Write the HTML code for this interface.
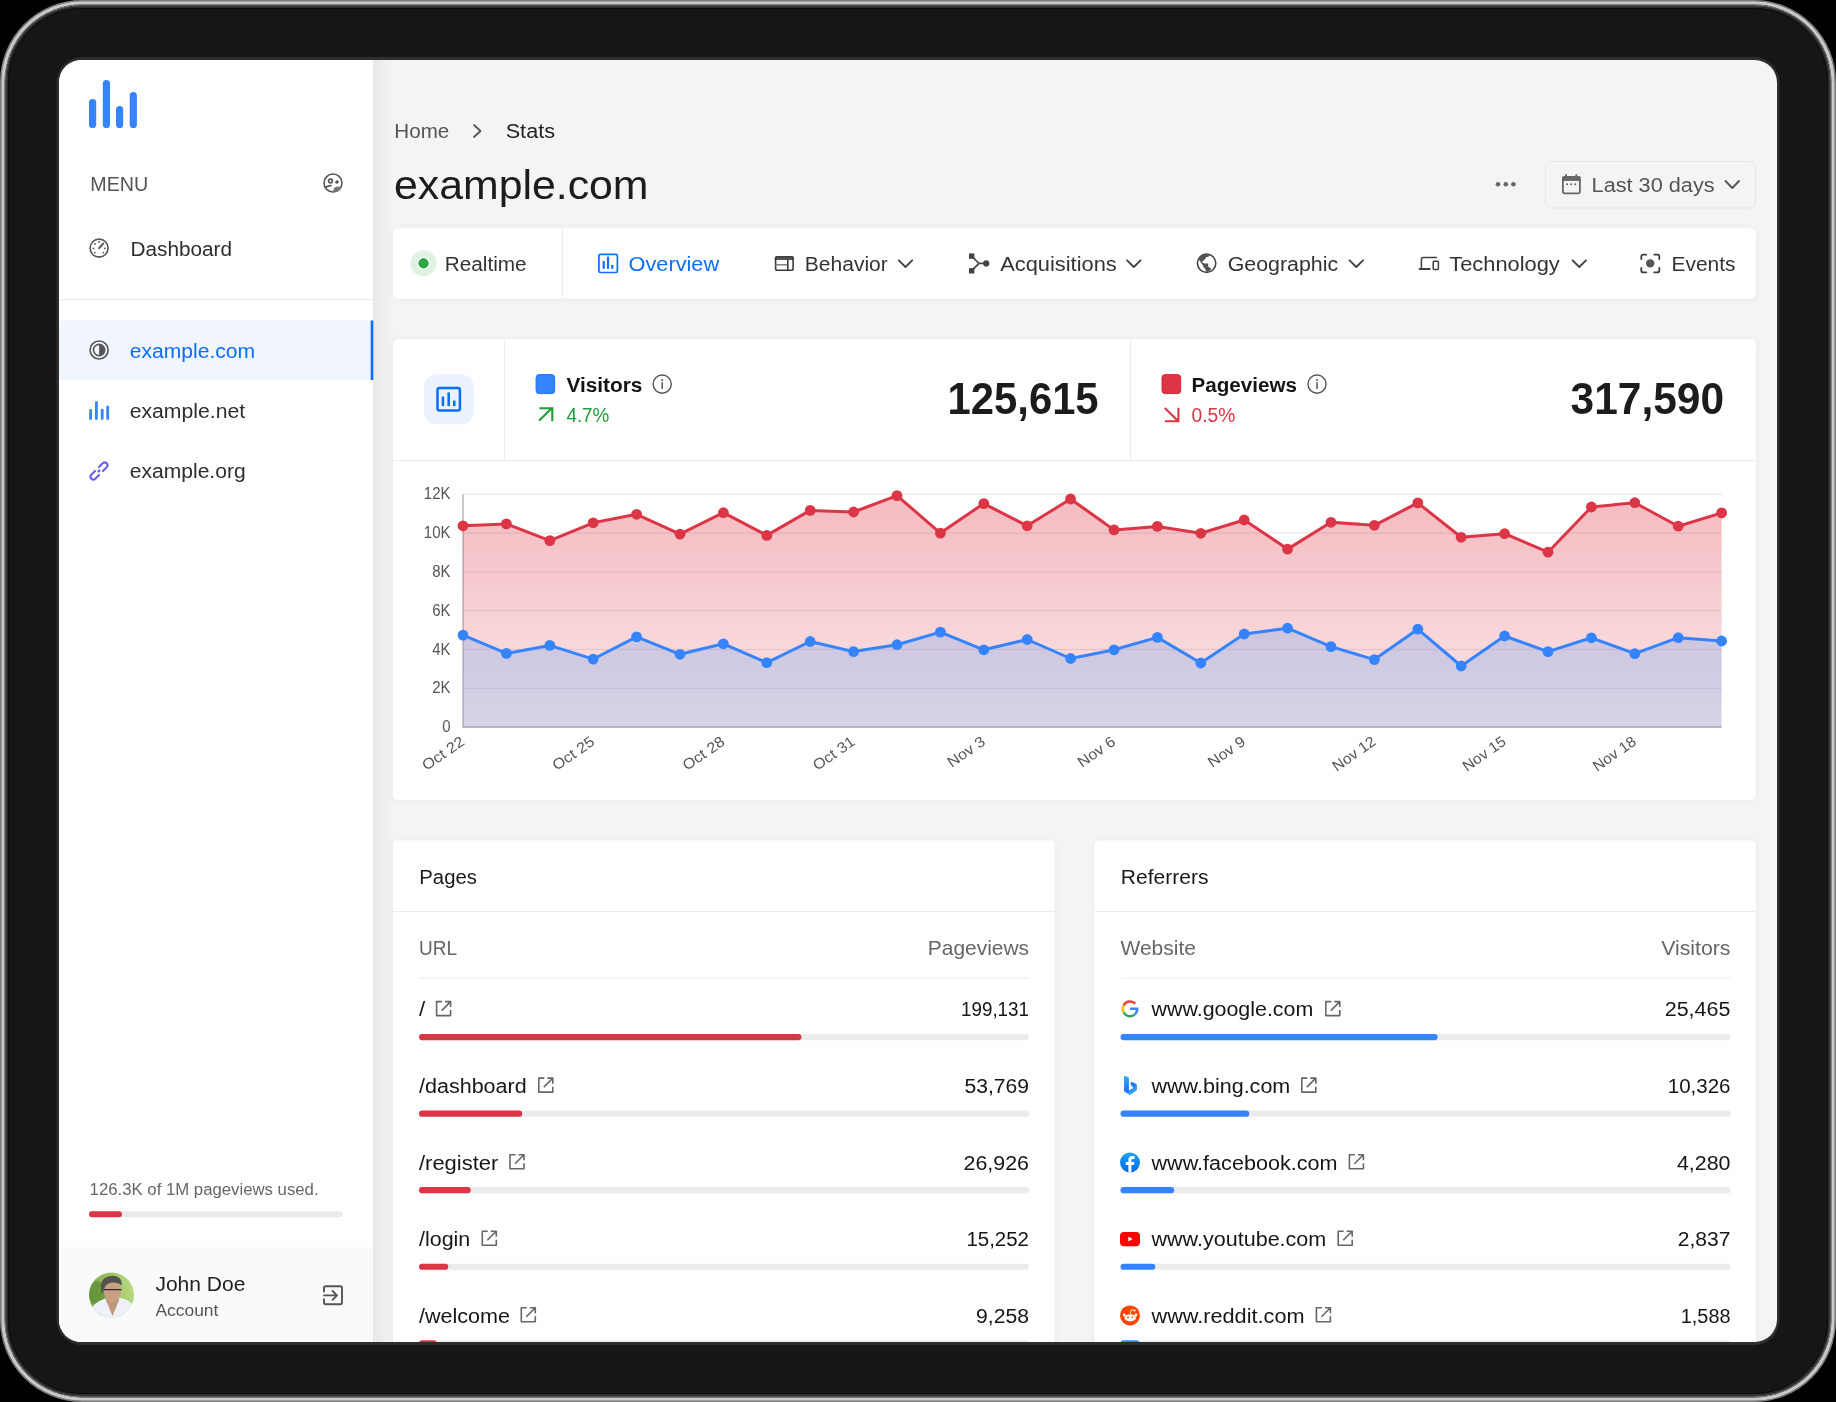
<!DOCTYPE html>
<html><head><meta charset="utf-8"><style>
html,body{margin:0;padding:0;background:#000;width:1836px;height:1402px;overflow:hidden}
svg{display:block;will-change:transform}
text{font-family:"Liberation Sans", sans-serif}
</style></head><body>
<svg width="1836" height="1402" viewBox="0 0 1836 1402">
<defs>
<linearGradient id="gRed" x1="0" y1="494" x2="0" y2="727" gradientUnits="userSpaceOnUse"><stop offset="0" stop-color="#dc3545" stop-opacity="0.34"/><stop offset="1" stop-color="#dc3545" stop-opacity="0.12"/></linearGradient>
<linearGradient id="gBlue" x1="0" y1="494" x2="0" y2="727" gradientUnits="userSpaceOnUse"><stop offset="0" stop-color="#7fa9ea" stop-opacity="0.42"/><stop offset="1" stop-color="#7fa9ea" stop-opacity="0.30"/></linearGradient>
<linearGradient id="shadow" x1="0" y1="0" x2="1" y2="0"><stop offset="0" stop-color="#000" stop-opacity="0.05"/><stop offset="1" stop-color="#000" stop-opacity="0"/></linearGradient>
<filter id="sh" x="-3%" y="-10%" width="106%" height="120%"><feDropShadow dx="0" dy="0.5" stdDeviation="3" flood-color="#000" flood-opacity="0.045"/></filter>
<clipPath id="scr"><rect x="59" y="60" width="1718" height="1282" rx="22.5" ry="22.5"/></clipPath>
<clipPath id="avc"><circle cx="111.5" cy="1295" r="22.5"/></clipPath>
<linearGradient id="avbg" x1="0" y1="0.5" x2="1" y2="0.3"><stop offset="0" stop-color="#76a544"/><stop offset="1" stop-color="#bcdc86"/></linearGradient>
</defs>

<rect x="0" y="0" width="1836" height="1402" rx="82" ry="82" fill="#161616"/>
<rect x="0.65" y="0.65" width="1834.7" height="1400.7" rx="81.35" ry="81.35" fill="none" stroke="#7a7a7a" stroke-width="1.3"/>
<rect x="2.95" y="2.95" width="1830.1" height="1396.1" rx="79.05" ry="79.05" fill="none" stroke="#c9c9c9" stroke-width="3.3"/>
<rect x="5.1" y="5.1" width="1825.8" height="1391.8" rx="76.9" ry="76.9" fill="none" stroke="#8a8a8a" stroke-width="1.0"/>
<rect x="6.2" y="6.2" width="1823.6" height="1389.6" rx="75.8" ry="75.8" fill="none" stroke="#444" stroke-width="1.2"/>
<rect x="7.4" y="7.4" width="1821.2" height="1387.2" rx="74.6" ry="74.6" fill="none" stroke="#2c2c2c" stroke-width="1.2"/>
<rect x="8.5" y="8.5" width="1819.0" height="1385.0" rx="73.5" ry="73.5" fill="none" stroke="#0b0b0b" stroke-width="1.0"/>
<rect x="56.5" y="57" width="1723" height="1288" rx="25.5" ry="25.5" fill="#2e2e2e"/>
<g clip-path="url(#scr)">
<rect x="59" y="60" width="1718" height="1282" fill="#f4f4f4"/>
<rect x="373" y="60" width="22" height="1282" fill="url(#shadow)"/>
<rect x="59" y="60" width="314" height="1282" fill="#ffffff"/>
<rect x="59" y="1247" width="314" height="95" fill="#f9fafc"/>
<rect x="59" y="299" width="314" height="1.2" fill="#ececec"/>
<rect x="59" y="320.5" width="314" height="59.5" fill="#f0f5fe"/>
<rect x="370.7" y="320.5" width="2.6" height="59.5" fill="#0d6efd"/>
<rect x="89" y="99" width="7.2" height="29" rx="3.6" fill="#3584fe"/>
<rect x="102.8" y="80" width="7.2" height="48" rx="3.6" fill="#3584fe"/>
<rect x="116" y="106" width="7.2" height="22" rx="3.6" fill="#3584fe"/>
<rect x="129.7" y="92" width="7.2" height="36" rx="3.6" fill="#3584fe"/>
<text x="90.3" y="190.5" font-size="19.5" fill="#555" font-weight="400" text-anchor="start" textLength="58" lengthAdjust="spacingAndGlyphs" >MENU</text>
<g fill="none" stroke="#555" stroke-width="1.6">
<circle cx="333" cy="183" r="9"/>
<circle cx="330.5" cy="181" r="1.9"/>
<path d="M325.5 187.2 Q328 185.8 331 185.6" stroke-linecap="round"/>
</g>
<circle cx="337" cy="182" r="1.8" fill="#555"/>
<path d="M333.2 192 Q333 187 337.5 186.6 Q340.5 186.6 341.6 187.6 A9 9 0 0 1 333.2 192 Z" fill="#777"/>
<g fill="none" stroke="#555" stroke-width="1.6" stroke-linecap="round">
<circle cx="99.1" cy="248.1" r="9"/>
<path d="M99.1 248.1 L103.2 243.6" stroke-width="2"/>
</g>
<g fill="#555">
<circle cx="99.1" cy="242" r="0.9"/><circle cx="95" cy="244" r="0.9"/><circle cx="93.4" cy="248.3" r="0.9"/>
<circle cx="94.9" cy="252.6" r="0.9"/><circle cx="103.3" cy="252.6" r="0.9"/><circle cx="104.8" cy="248.3" r="0.9"/>
</g>
<text x="130.5" y="256" font-size="20" fill="#2e2e2e" font-weight="400" text-anchor="start" textLength="101.5" lengthAdjust="spacingAndGlyphs" >Dashboard</text>
<circle cx="99.1" cy="350" r="9" fill="none" stroke="#555" stroke-width="1.6"/>
<circle cx="99.1" cy="350" r="5.6" fill="none" stroke="#555" stroke-width="1.6"/>
<path d="M99.1 344.4 A5.6 5.6 0 0 1 99.1 355.6 Z" fill="#555"/>
<text x="129.7" y="357.6" font-size="20" fill="#0d6efd" font-weight="400" text-anchor="start" textLength="125.5" lengthAdjust="spacingAndGlyphs" >example.com</text>
<rect x="89.2" y="409" width="2.8" height="11" rx="1.4" fill="#3584fe"/>
<rect x="95" y="401" width="2.8" height="19" rx="1.4" fill="#3584fe"/>
<rect x="100.8" y="408.7" width="2.8" height="11.300000000000011" rx="1.4" fill="#3584fe"/>
<rect x="106.3" y="405.6" width="2.8" height="14.399999999999977" rx="1.4" fill="#3584fe"/>
<text x="129.7" y="417.9" font-size="20" fill="#2e2e2e" font-weight="400" text-anchor="start" textLength="115.5" lengthAdjust="spacingAndGlyphs" >example.net</text>
<g fill="none" stroke="#6a5ef8" stroke-width="2.1" stroke-linecap="round" transform="translate(99 471) rotate(-45)">
<path d="M2.8 -2.8 H8 A2.8 2.8 0 0 1 8 2.8 H2.8"/>
<path d="M-2.8 2.8 H-8 A2.8 2.8 0 0 1 -8 -2.8 H-2.8"/>
<path d="M-0.6 0 H0.6" stroke-width="2.3"/>
</g>
<text x="129.7" y="478.4" font-size="20" fill="#2e2e2e" font-weight="400" text-anchor="start" textLength="116" lengthAdjust="spacingAndGlyphs" >example.org</text>
<text x="89.6" y="1194.8" font-size="16" fill="#666" font-weight="400" text-anchor="start" textLength="229" lengthAdjust="spacingAndGlyphs" >126.3K of 1M pageviews used.</text>
<rect x="89" y="1211.3" width="254" height="6" rx="3" fill="#ebebeb"/>
<rect x="89" y="1211.3" width="33" height="6" rx="3" fill="#dc3545"/>
<g clip-path="url(#avc)"><rect x="88" y="1272" width="47" height="47" fill="url(#avbg)"/><ellipse cx="97" cy="1293" rx="8" ry="12" fill="#5e8f32" opacity="0.7"/><path d="M86 1322 Q90 1303 104 1299 L121 1298 Q133 1301 138 1312 L138 1322 Z" fill="#edf1f7"/><path d="M105.5 1299 L119.5 1299 L112.5 1316 Z" fill="#c19878"/><ellipse cx="112.5" cy="1291" rx="8.6" ry="11" fill="#c9a083"/><path d="M101.8 1294 Q99 1283 104 1278.5 Q110 1274.5 117 1276.5 Q122.5 1279 121.5 1285.5 Q118 1282 112 1282.5 Q105.5 1283 103.8 1290 Z" fill="#56524f"/><path d="M104 1289.7 H121.5" stroke="#2b2b2b" stroke-width="1.3"/></g>
<text x="155.4" y="1290.5" font-size="20" fill="#222" font-weight="400" text-anchor="start" textLength="90" lengthAdjust="spacingAndGlyphs" >John Doe</text>
<text x="155.4" y="1316" font-size="16" fill="#555" font-weight="400" text-anchor="start" textLength="63" lengthAdjust="spacingAndGlyphs" >Account</text>
<g fill="none" stroke="#555" stroke-width="1.9" stroke-linecap="round" stroke-linejoin="round">
<path d="M324 1291.6 V1288 Q324 1286.3 325.7 1286.3 H340.3 Q342 1286.3 342 1288 V1302.5 Q342 1304.2 340.3 1304.2 H325.7 Q324 1304.2 324 1302.5 V1299.2"/>
<path d="M324 1295.4 H336.6 M332.6 1291 L337 1295.4 L332.6 1299.8"/>
</g>
<text x="394.3" y="137.7" font-size="20" fill="#555" font-weight="400" text-anchor="start" textLength="55" lengthAdjust="spacingAndGlyphs" >Home</text>
<path d="M474 125 L480.5 131 L474 137" fill="none" stroke="#555" stroke-width="1.8" stroke-linecap="round" stroke-linejoin="round"/>
<text x="505.7" y="137.7" font-size="20" fill="#222" font-weight="400" text-anchor="start" textLength="49.3" lengthAdjust="spacingAndGlyphs" >Stats</text>
<text x="394" y="198.5" font-size="40" fill="#1c1c1c" font-weight="400" text-anchor="start" textLength="254.5" lengthAdjust="spacingAndGlyphs" >example.com</text>
<circle cx="1498" cy="184.3" r="2.3" fill="#666"/>
<circle cx="1505.8" cy="184.3" r="2.3" fill="#666"/>
<circle cx="1513.4" cy="184.3" r="2.3" fill="#666"/>
<rect x="1545.5" y="161.5" width="210" height="46.5" rx="6" fill="none" stroke="#e6e6e6" stroke-width="1"/>
<g fill="none" stroke="#666" stroke-width="1.8" stroke-linejoin="round">
<rect x="1562.9" y="177" width="17" height="16.4" rx="1.8"/>
</g>
<rect x="1562.5" y="176.5" width="18" height="4.4" fill="#666"/>
<rect x="1565.2" y="174" width="1.8" height="4" rx="0.9" fill="#666"/>
<rect x="1575.4" y="174" width="1.8" height="4" rx="0.9" fill="#666"/>
<circle cx="1567.1" cy="184.3" r="1" fill="#666"/><circle cx="1571.2" cy="184.3" r="1" fill="#666"/><circle cx="1575.3" cy="184.3" r="1" fill="#666"/>
<text x="1591.6" y="191.9" font-size="20" fill="#555" font-weight="400" text-anchor="start" textLength="123" lengthAdjust="spacingAndGlyphs" >Last 30 days</text>
<path d="M1725.5 181 L1732.3 188 L1739 181" fill="none" stroke="#555" stroke-width="1.9" stroke-linecap="round" stroke-linejoin="round"/>
<rect x="393" y="228.3" width="1363" height="70.2" rx="5" fill="#fff" filter="url(#sh)"/>
<rect x="562" y="228.3" width="1" height="70.2" fill="#ececec"/>
<circle cx="423.5" cy="263.3" r="13" fill="#dff2e2"/><circle cx="423.5" cy="263.3" r="6.4" fill="#fff"/><circle cx="423.5" cy="263.3" r="4.6" fill="#2ea845" stroke="#0f9d2e" stroke-width="1"/>
<text x="444.7" y="271.2" font-size="20" fill="#333" font-weight="400" text-anchor="start" textLength="82" lengthAdjust="spacingAndGlyphs" >Realtime</text>
<g fill="none" stroke="#0d6efd" stroke-width="1.7"><rect x="598.9" y="254.3" width="18.5" height="18.2" rx="1.5"/></g>
<rect x="602.6" y="261" width="2.2" height="7.8" fill="#0d6efd"/><rect x="606.9" y="256.6" width="2.2" height="12.2" fill="#0d6efd"/><rect x="611.2" y="265" width="2.2" height="3.8" fill="#0d6efd"/>
<text x="628.6" y="271.2" font-size="20" fill="#0d6efd" font-weight="400" text-anchor="start" textLength="90.5" lengthAdjust="spacingAndGlyphs" >Overview</text>
<path d="M774.8 258 Q774.8 255.9 776.9 255.9 H791.8 Q793.9 255.9 793.9 258 V260 H774.8 Z" fill="#555"/>
<g fill="none" stroke="#3c3c3c" stroke-width="1.6"><rect x="775.6" y="256.7" width="17.5" height="13.5" rx="1.8"/>
<path d="M787.8 259.6 V270.5"/></g><path d="M775.5 264.8 H787" stroke="#777" stroke-width="1.4"/>
<text x="804.8" y="271.2" font-size="20" fill="#333" font-weight="400" text-anchor="start" textLength="83" lengthAdjust="spacingAndGlyphs" >Behavior</text>
<path d="M898.8 260.3 L905.5 267 L912.2 260.3" fill="none" stroke="#444" stroke-width="1.9" stroke-linecap="round" stroke-linejoin="round"/>
<g fill="#444"><rect x="969" y="253.4" width="5.4" height="5.4"/><rect x="969" y="268.1" width="5.4" height="5.4"/><circle cx="986.2" cy="263.4" r="3.1"/></g>
<path d="M971.4 256 L979 263.4 L971.4 270.8 M979 263.4 H986" fill="none" stroke="#444" stroke-width="1.7"/>
<text x="1000.2" y="271.2" font-size="20" fill="#333" font-weight="400" text-anchor="start" textLength="116.5" lengthAdjust="spacingAndGlyphs" >Acquisitions</text>
<path d="M1127.1 260.3 L1133.8 267 L1140.5 260.3" fill="none" stroke="#444" stroke-width="1.9" stroke-linecap="round" stroke-linejoin="round"/>
<circle cx="1206.6" cy="263.3" r="9.2" fill="none" stroke="#444" stroke-width="1.6"/>
<path d="M1198.8 259.5 Q1200 255 1206 254.2 Q1209 254.3 1209.6 255.5 Q1208.5 257 1206.5 257 Q1205 258.5 1204.5 260 Q1203 260.8 1202 261.7 Q1203 263.3 1205 263.5 L1208.2 263.6 L1208.3 266.8 Q1210 268 1211.5 268.5 Q1210 271.2 1206.6 272.5 L1205.5 269.5 Q1203 267 1202.7 265 Z" fill="#555"/>
<text x="1227.7" y="271.2" font-size="20" fill="#333" font-weight="400" text-anchor="start" textLength="110.5" lengthAdjust="spacingAndGlyphs" >Geographic</text>
<path d="M1349.6 260.3 L1356.3 267 L1363.0 260.3" fill="none" stroke="#444" stroke-width="1.9" stroke-linecap="round" stroke-linejoin="round"/>
<g fill="none" stroke="#3f3f3f" stroke-width="1.5" stroke-linecap="round"><path d="M1421.4 268.6 V259.3 Q1421.4 257.6 1423.1 257.6 H1436.4"/><path d="M1419.6 269.1 H1429.7" stroke-width="2"/><rect x="1433.2" y="261.3" width="5.2" height="8.1" rx="0.9"/></g>
<text x="1449.3" y="271.2" font-size="20" fill="#333" font-weight="400" text-anchor="start" textLength="110.5" lengthAdjust="spacingAndGlyphs" >Technology</text>
<path d="M1572.6 260.3 L1579.3 267 L1586.0 260.3" fill="none" stroke="#444" stroke-width="1.9" stroke-linecap="round" stroke-linejoin="round"/>
<g fill="none" stroke="#3f3f3f" stroke-width="1.8" stroke-linecap="round" stroke-linejoin="round"><path d="M1641.3 259.1 V256.6 Q1641.3 254.6 1643.3 254.6 H1646.3 M1654.2 254.6 H1657.3 Q1659.3 254.6 1659.3 256.6 V259.1 M1659.3 267.8 V270.4 Q1659.3 272.4 1657.3 272.4 H1654.2 M1646.3 272.4 H1643.3 Q1641.3 272.4 1641.3 270.4 V267.8"/></g><circle cx="1650.2" cy="263.4" r="4.2" fill="#555"/>
<text x="1671.5" y="271.2" font-size="20" fill="#333" font-weight="400" text-anchor="start" textLength="64" lengthAdjust="spacingAndGlyphs" >Events</text>
<rect x="393" y="339" width="1363" height="461" rx="5" fill="#fff" filter="url(#sh)"/>
<rect x="504" y="339" width="1" height="121" fill="#ececec"/>
<rect x="1130" y="339" width="1" height="121" fill="#ececec"/>
<rect x="393" y="460" width="1363" height="1" fill="#ececec"/>
<rect x="423.8" y="374.2" width="50" height="50" rx="13" fill="#eaf2fe"/>
<rect x="437.5" y="387.9" width="22.4" height="22.6" rx="2" fill="none" stroke="#0d6efd" stroke-width="2.5"/>
<rect x="441.7" y="396.5" width="2.5" height="9.6" fill="#0d6efd"/><rect x="447.4" y="392.4" width="2.6" height="13.7" fill="#0d6efd"/><rect x="453" y="400.6" width="2.5" height="5.5" fill="#0d6efd"/>
<rect x="536.1" y="374.6" width="18.6" height="19" rx="3.2" fill="#3584fe" stroke="#1f73fd" stroke-width="1"/>
<text x="566.4" y="391.8" font-size="20" fill="#141414" font-weight="700" text-anchor="start" textLength="76" lengthAdjust="spacingAndGlyphs" >Visitors</text>
<circle cx="662.2" cy="384.1" r="9.1" fill="none" stroke="#555" stroke-width="1.4"/><circle cx="662.2" cy="379.90000000000003" r="1" fill="#555"/><rect x="661.45" y="382.3" width="1.5" height="6.6" fill="#555"/>
<path d="M539.2 420.5 L552.2 407.7 M539.3 408.2 H552.3 V421.2" fill="none" stroke="#1f9d36" stroke-width="2.1"/>
<text x="566.4" y="421.9" font-size="20" fill="#1f9d36" font-weight="400" text-anchor="start" textLength="43" lengthAdjust="spacingAndGlyphs" >4.7%</text>
<text x="0" y="0" transform="translate(947.6 413.9) scale(1 1.06)" font-size="42" fill="#1c1c1c" font-weight="700" text-anchor="start" textLength="151" lengthAdjust="spacingAndGlyphs" >125,615</text>
<rect x="1162" y="374.6" width="18.7" height="19" rx="3.2" fill="#dc3545" stroke="#d92335" stroke-width="1"/>
<text x="1191.5" y="391.8" font-size="20" fill="#141414" font-weight="700" text-anchor="start" textLength="105.5" lengthAdjust="spacingAndGlyphs" >Pageviews</text>
<circle cx="1317" cy="384.1" r="9.1" fill="none" stroke="#555" stroke-width="1.4"/><circle cx="1317" cy="379.90000000000003" r="1" fill="#555"/><rect x="1316.25" y="382.3" width="1.5" height="6.6" fill="#555"/>
<path d="M1164.8 407.9 L1177.8 420.7 M1164.9 421.3 H1178.4 V407.8" fill="none" stroke="#dc3545" stroke-width="2.1"/>
<text x="1191.5" y="421.9" font-size="20" fill="#dc3545" font-weight="400" text-anchor="start" textLength="43.8" lengthAdjust="spacingAndGlyphs" >0.5%</text>
<text x="0" y="0" transform="translate(1570.6 413.5) scale(1 1.06)" font-size="42" fill="#1c1c1c" font-weight="700" text-anchor="start" textLength="153.5" lengthAdjust="spacingAndGlyphs" >317,590</text>
<rect x="463.0" y="726.50" width="1258.60" height="1.2" fill="#bdbdbd"/>
<text x="450.5" y="732.10" font-size="15.6" fill="#555" font-weight="400" text-anchor="end" textLength="8.34" lengthAdjust="spacingAndGlyphs" >0</text>
<rect x="463.0" y="687.70" width="1258.60" height="1.2" fill="#e6e6e6"/>
<text x="450.5" y="693.30" font-size="15.6" fill="#555" font-weight="400" text-anchor="end" textLength="18.34" lengthAdjust="spacingAndGlyphs" >2K</text>
<rect x="463.0" y="648.90" width="1258.60" height="1.2" fill="#e6e6e6"/>
<text x="450.5" y="654.50" font-size="15.6" fill="#555" font-weight="400" text-anchor="end" textLength="18.34" lengthAdjust="spacingAndGlyphs" >4K</text>
<rect x="463.0" y="610.10" width="1258.60" height="1.2" fill="#e6e6e6"/>
<text x="450.5" y="615.70" font-size="15.6" fill="#555" font-weight="400" text-anchor="end" textLength="18.34" lengthAdjust="spacingAndGlyphs" >6K</text>
<rect x="463.0" y="571.30" width="1258.60" height="1.2" fill="#e6e6e6"/>
<text x="450.5" y="576.90" font-size="15.6" fill="#555" font-weight="400" text-anchor="end" textLength="18.34" lengthAdjust="spacingAndGlyphs" >8K</text>
<rect x="463.0" y="532.50" width="1258.60" height="1.2" fill="#e6e6e6"/>
<text x="450.5" y="538.10" font-size="15.6" fill="#555" font-weight="400" text-anchor="end" textLength="26.68" lengthAdjust="spacingAndGlyphs" >10K</text>
<rect x="463.0" y="493.70" width="1258.60" height="1.2" fill="#e6e6e6"/>
<text x="450.5" y="499.30" font-size="15.6" fill="#555" font-weight="400" text-anchor="end" textLength="26.68" lengthAdjust="spacingAndGlyphs" >12K</text>
<rect x="462.4" y="494.2" width="1.2" height="233.40" fill="#a8a8a8"/>
<rect x="462.4" y="726.4" width="1259.20" height="1.4" fill="#b8b8b8"/>
<polygon points="463.0,727.0 463.00,525.80 506.40,523.90 549.80,540.60 593.20,522.80 636.60,514.30 680.00,534.20 723.40,512.70 766.80,535.40 810.20,510.40 853.60,512.00 897.00,495.60 940.40,533.10 983.80,503.60 1027.20,525.80 1070.60,499.00 1114.00,529.90 1157.40,526.40 1200.80,533.30 1244.20,520.00 1287.60,549.10 1331.00,522.30 1374.40,525.30 1417.80,502.90 1461.20,537.30 1504.60,533.70 1548.00,552.20 1591.40,507.00 1634.80,502.70 1678.20,526.20 1721.60,512.90 1721.6,727.0" fill="url(#gRed)"/>
<polygon points="463.0,727.0 463.00,635.10 506.40,653.40 549.80,645.40 593.20,659.10 636.60,636.90 680.00,654.30 723.40,643.80 766.80,662.60 810.20,641.50 853.60,651.60 897.00,644.70 940.40,632.10 983.80,649.80 1027.20,639.50 1070.60,658.50 1114.00,649.80 1157.40,637.40 1200.80,663.00 1244.20,634.00 1287.60,628.20 1331.00,646.60 1374.40,659.60 1417.80,629.20 1461.20,666.00 1504.60,636.00 1548.00,651.60 1591.40,637.80 1634.80,653.70 1678.20,637.70 1721.60,641.00 1721.6,727.0" fill="url(#gBlue)"/>
<polyline points="463.00,525.80 506.40,523.90 549.80,540.60 593.20,522.80 636.60,514.30 680.00,534.20 723.40,512.70 766.80,535.40 810.20,510.40 853.60,512.00 897.00,495.60 940.40,533.10 983.80,503.60 1027.20,525.80 1070.60,499.00 1114.00,529.90 1157.40,526.40 1200.80,533.30 1244.20,520.00 1287.60,549.10 1331.00,522.30 1374.40,525.30 1417.80,502.90 1461.20,537.30 1504.60,533.70 1548.00,552.20 1591.40,507.00 1634.80,502.70 1678.20,526.20 1721.60,512.90" fill="none" stroke="#dc3545" stroke-width="3" stroke-linejoin="round"/>
<polyline points="463.00,635.10 506.40,653.40 549.80,645.40 593.20,659.10 636.60,636.90 680.00,654.30 723.40,643.80 766.80,662.60 810.20,641.50 853.60,651.60 897.00,644.70 940.40,632.10 983.80,649.80 1027.20,639.50 1070.60,658.50 1114.00,649.80 1157.40,637.40 1200.80,663.00 1244.20,634.00 1287.60,628.20 1331.00,646.60 1374.40,659.60 1417.80,629.20 1461.20,666.00 1504.60,636.00 1548.00,651.60 1591.40,637.80 1634.80,653.70 1678.20,637.70 1721.60,641.00" fill="none" stroke="#3584fe" stroke-width="3" stroke-linejoin="round"/>
<circle cx="463.00" cy="525.80" r="5.4" fill="#dc3545"/>
<circle cx="506.40" cy="523.90" r="5.4" fill="#dc3545"/>
<circle cx="549.80" cy="540.60" r="5.4" fill="#dc3545"/>
<circle cx="593.20" cy="522.80" r="5.4" fill="#dc3545"/>
<circle cx="636.60" cy="514.30" r="5.4" fill="#dc3545"/>
<circle cx="680.00" cy="534.20" r="5.4" fill="#dc3545"/>
<circle cx="723.40" cy="512.70" r="5.4" fill="#dc3545"/>
<circle cx="766.80" cy="535.40" r="5.4" fill="#dc3545"/>
<circle cx="810.20" cy="510.40" r="5.4" fill="#dc3545"/>
<circle cx="853.60" cy="512.00" r="5.4" fill="#dc3545"/>
<circle cx="897.00" cy="495.60" r="5.4" fill="#dc3545"/>
<circle cx="940.40" cy="533.10" r="5.4" fill="#dc3545"/>
<circle cx="983.80" cy="503.60" r="5.4" fill="#dc3545"/>
<circle cx="1027.20" cy="525.80" r="5.4" fill="#dc3545"/>
<circle cx="1070.60" cy="499.00" r="5.4" fill="#dc3545"/>
<circle cx="1114.00" cy="529.90" r="5.4" fill="#dc3545"/>
<circle cx="1157.40" cy="526.40" r="5.4" fill="#dc3545"/>
<circle cx="1200.80" cy="533.30" r="5.4" fill="#dc3545"/>
<circle cx="1244.20" cy="520.00" r="5.4" fill="#dc3545"/>
<circle cx="1287.60" cy="549.10" r="5.4" fill="#dc3545"/>
<circle cx="1331.00" cy="522.30" r="5.4" fill="#dc3545"/>
<circle cx="1374.40" cy="525.30" r="5.4" fill="#dc3545"/>
<circle cx="1417.80" cy="502.90" r="5.4" fill="#dc3545"/>
<circle cx="1461.20" cy="537.30" r="5.4" fill="#dc3545"/>
<circle cx="1504.60" cy="533.70" r="5.4" fill="#dc3545"/>
<circle cx="1548.00" cy="552.20" r="5.4" fill="#dc3545"/>
<circle cx="1591.40" cy="507.00" r="5.4" fill="#dc3545"/>
<circle cx="1634.80" cy="502.70" r="5.4" fill="#dc3545"/>
<circle cx="1678.20" cy="526.20" r="5.4" fill="#dc3545"/>
<circle cx="1721.60" cy="512.90" r="5.4" fill="#dc3545"/>
<circle cx="463.00" cy="635.10" r="5.4" fill="#3584fe"/>
<circle cx="506.40" cy="653.40" r="5.4" fill="#3584fe"/>
<circle cx="549.80" cy="645.40" r="5.4" fill="#3584fe"/>
<circle cx="593.20" cy="659.10" r="5.4" fill="#3584fe"/>
<circle cx="636.60" cy="636.90" r="5.4" fill="#3584fe"/>
<circle cx="680.00" cy="654.30" r="5.4" fill="#3584fe"/>
<circle cx="723.40" cy="643.80" r="5.4" fill="#3584fe"/>
<circle cx="766.80" cy="662.60" r="5.4" fill="#3584fe"/>
<circle cx="810.20" cy="641.50" r="5.4" fill="#3584fe"/>
<circle cx="853.60" cy="651.60" r="5.4" fill="#3584fe"/>
<circle cx="897.00" cy="644.70" r="5.4" fill="#3584fe"/>
<circle cx="940.40" cy="632.10" r="5.4" fill="#3584fe"/>
<circle cx="983.80" cy="649.80" r="5.4" fill="#3584fe"/>
<circle cx="1027.20" cy="639.50" r="5.4" fill="#3584fe"/>
<circle cx="1070.60" cy="658.50" r="5.4" fill="#3584fe"/>
<circle cx="1114.00" cy="649.80" r="5.4" fill="#3584fe"/>
<circle cx="1157.40" cy="637.40" r="5.4" fill="#3584fe"/>
<circle cx="1200.80" cy="663.00" r="5.4" fill="#3584fe"/>
<circle cx="1244.20" cy="634.00" r="5.4" fill="#3584fe"/>
<circle cx="1287.60" cy="628.20" r="5.4" fill="#3584fe"/>
<circle cx="1331.00" cy="646.60" r="5.4" fill="#3584fe"/>
<circle cx="1374.40" cy="659.60" r="5.4" fill="#3584fe"/>
<circle cx="1417.80" cy="629.20" r="5.4" fill="#3584fe"/>
<circle cx="1461.20" cy="666.00" r="5.4" fill="#3584fe"/>
<circle cx="1504.60" cy="636.00" r="5.4" fill="#3584fe"/>
<circle cx="1548.00" cy="651.60" r="5.4" fill="#3584fe"/>
<circle cx="1591.40" cy="637.80" r="5.4" fill="#3584fe"/>
<circle cx="1634.80" cy="653.70" r="5.4" fill="#3584fe"/>
<circle cx="1678.20" cy="637.70" r="5.4" fill="#3584fe"/>
<circle cx="1721.60" cy="641.00" r="5.4" fill="#3584fe"/>
<text x="0" y="0" font-size="15" fill="#555" text-anchor="end" dominant-baseline="middle" textLength="47.50" lengthAdjust="spacingAndGlyphs" transform="translate(463.20,740.6) rotate(-35)">Oct 22</text>
<text x="0" y="0" font-size="15" fill="#555" text-anchor="end" dominant-baseline="middle" textLength="47.50" lengthAdjust="spacingAndGlyphs" transform="translate(593.40,740.6) rotate(-35)">Oct 25</text>
<text x="0" y="0" font-size="15" fill="#555" text-anchor="end" dominant-baseline="middle" textLength="47.50" lengthAdjust="spacingAndGlyphs" transform="translate(723.60,740.6) rotate(-35)">Oct 28</text>
<text x="0" y="0" font-size="15" fill="#555" text-anchor="end" dominant-baseline="middle" textLength="47.50" lengthAdjust="spacingAndGlyphs" transform="translate(853.80,740.6) rotate(-35)">Oct 31</text>
<text x="0" y="0" font-size="15" fill="#555" text-anchor="end" dominant-baseline="middle" textLength="42.13" lengthAdjust="spacingAndGlyphs" transform="translate(984.00,740.6) rotate(-35)">Nov 3</text>
<text x="0" y="0" font-size="15" fill="#555" text-anchor="end" dominant-baseline="middle" textLength="42.13" lengthAdjust="spacingAndGlyphs" transform="translate(1114.20,740.6) rotate(-35)">Nov 6</text>
<text x="0" y="0" font-size="15" fill="#555" text-anchor="end" dominant-baseline="middle" textLength="42.13" lengthAdjust="spacingAndGlyphs" transform="translate(1244.40,740.6) rotate(-35)">Nov 9</text>
<text x="0" y="0" font-size="15" fill="#555" text-anchor="end" dominant-baseline="middle" textLength="48.96" lengthAdjust="spacingAndGlyphs" transform="translate(1374.60,740.6) rotate(-35)">Nov 12</text>
<text x="0" y="0" font-size="15" fill="#555" text-anchor="end" dominant-baseline="middle" textLength="48.96" lengthAdjust="spacingAndGlyphs" transform="translate(1504.80,740.6) rotate(-35)">Nov 15</text>
<text x="0" y="0" font-size="15" fill="#555" text-anchor="end" dominant-baseline="middle" textLength="48.96" lengthAdjust="spacingAndGlyphs" transform="translate(1635.00,740.6) rotate(-35)">Nov 18</text>
<rect x="393" y="840.4" width="661.5" height="560" rx="5" fill="#fff" filter="url(#sh)"/>
<rect x="393" y="911" width="661.5" height="1" fill="#ececec"/>
<text x="419.3" y="883.5" font-size="20" fill="#1a1a1a" font-weight="500" text-anchor="start" textLength="57.6" lengthAdjust="spacingAndGlyphs" >Pages</text>
<text x="419" y="954.9" font-size="21" fill="#666" font-weight="400" text-anchor="start" textLength="38" lengthAdjust="spacingAndGlyphs" >URL</text>
<text x="1029" y="954.9" font-size="21" fill="#666" font-weight="400" text-anchor="end" textLength="101.2" lengthAdjust="spacingAndGlyphs" >Pageviews</text>
<rect x="419" y="977.5" width="610" height="1" fill="#ececec"/>
<text x="419" y="1016.40" font-size="20" fill="#161616" font-weight="400" text-anchor="start" textLength="6.2" lengthAdjust="spacingAndGlyphs" >/</text>
<rect x="419" y="1034.00" width="610" height="6.2" rx="3.1" fill="#ebebeb"/>
<rect x="419" y="1034.00" width="382.47" height="6.2" rx="3.1" fill="#dc3545"/>
<text x="1029" y="1016.40" font-size="20" fill="#161616" font-weight="400" text-anchor="end" textLength="68" lengthAdjust="spacingAndGlyphs" >199,131</text>
<text x="419" y="1092.95" font-size="20" fill="#161616" font-weight="400" text-anchor="start" textLength="107.7" lengthAdjust="spacingAndGlyphs" >/dashboard</text>
<rect x="419" y="1110.55" width="610" height="6.2" rx="3.1" fill="#ebebeb"/>
<rect x="419" y="1110.55" width="103.27" height="6.2" rx="3.1" fill="#dc3545"/>
<text x="1029" y="1092.95" font-size="20" fill="#161616" font-weight="400" text-anchor="end" textLength="64.5" lengthAdjust="spacingAndGlyphs" >53,769</text>
<text x="419" y="1169.50" font-size="20" fill="#161616" font-weight="400" text-anchor="start" textLength="79.3" lengthAdjust="spacingAndGlyphs" >/register</text>
<rect x="419" y="1187.10" width="610" height="6.2" rx="3.1" fill="#ebebeb"/>
<rect x="419" y="1187.10" width="51.72" height="6.2" rx="3.1" fill="#dc3545"/>
<text x="1029" y="1169.50" font-size="20" fill="#161616" font-weight="400" text-anchor="end" textLength="65.5" lengthAdjust="spacingAndGlyphs" >26,926</text>
<text x="419" y="1246.05" font-size="20" fill="#161616" font-weight="400" text-anchor="start" textLength="51.3" lengthAdjust="spacingAndGlyphs" >/login</text>
<rect x="419" y="1263.65" width="610" height="6.2" rx="3.1" fill="#ebebeb"/>
<rect x="419" y="1263.65" width="29.29" height="6.2" rx="3.1" fill="#dc3545"/>
<text x="1029" y="1246.05" font-size="20" fill="#161616" font-weight="400" text-anchor="end" textLength="62.6" lengthAdjust="spacingAndGlyphs" >15,252</text>
<text x="419" y="1322.60" font-size="20" fill="#161616" font-weight="400" text-anchor="start" textLength="91" lengthAdjust="spacingAndGlyphs" >/welcome</text>
<rect x="419" y="1340.20" width="610" height="6.2" rx="3.1" fill="#ebebeb"/>
<rect x="419" y="1340.20" width="17.78" height="6.2" rx="3.1" fill="#dc3545"/>
<text x="1029" y="1322.60" font-size="20" fill="#161616" font-weight="400" text-anchor="end" textLength="53" lengthAdjust="spacingAndGlyphs" >9,258</text>
<g fill="none" stroke="#666" stroke-width="1.6" stroke-linejoin="round"><path d="M442.1 1001.6 H436.6 V1015.6 H450.6 V1010.1"/><path d="M441.6 1010.6 L450.1 1002.1 M445.1 1001.6 H450.6 V1007.1"/></g>
<g fill="none" stroke="#666" stroke-width="1.6" stroke-linejoin="round"><path d="M544.3 1078.15 H538.8 V1092.15 H552.8 V1086.65"/><path d="M543.8 1087.15 L552.3 1078.65 M547.3 1078.15 H552.8 V1083.65"/></g>
<g fill="none" stroke="#666" stroke-width="1.6" stroke-linejoin="round"><path d="M515.5 1154.7 H510 V1168.7 H524 V1163.2"/><path d="M515 1163.7 L523.5 1155.2 M518.5 1154.7 H524 V1160.2"/></g>
<g fill="none" stroke="#666" stroke-width="1.6" stroke-linejoin="round"><path d="M487.8 1231.25 H482.3 V1245.25 H496.3 V1239.75"/><path d="M487.3 1240.25 L495.8 1231.75 M490.8 1231.25 H496.3 V1236.75"/></g>
<g fill="none" stroke="#666" stroke-width="1.6" stroke-linejoin="round"><path d="M526.8 1307.8 H521.3 V1321.8 H535.3 V1316.3"/><path d="M526.3 1316.8 L534.8 1308.3 M529.8 1307.8 H535.3 V1313.3"/></g>
<rect x="1094.5" y="840.4" width="661.5" height="560" rx="5" fill="#fff" filter="url(#sh)"/>
<rect x="1094.5" y="911" width="661.5" height="1" fill="#ececec"/>
<text x="1120.8" y="883.5" font-size="20" fill="#1a1a1a" font-weight="500" text-anchor="start" textLength="87.7" lengthAdjust="spacingAndGlyphs" >Referrers</text>
<text x="1120.5" y="954.9" font-size="21" fill="#666" font-weight="400" text-anchor="start" textLength="75.4" lengthAdjust="spacingAndGlyphs" >Website</text>
<text x="1730.5" y="954.9" font-size="21" fill="#666" font-weight="400" text-anchor="end" textLength="69.3" lengthAdjust="spacingAndGlyphs" >Visitors</text>
<rect x="1120.5" y="977.5" width="610" height="1" fill="#ececec"/>
<text x="1151.5" y="1016.40" font-size="20" fill="#161616" font-weight="400" text-anchor="start" textLength="161.8" lengthAdjust="spacingAndGlyphs" >www.google.com</text>
<rect x="1120.5" y="1034.00" width="610" height="6.2" rx="3.1" fill="#ebebeb"/>
<rect x="1120.5" y="1034.00" width="317.20" height="6.2" rx="3.1" fill="#3584fe"/>
<text x="1730.5" y="1016.40" font-size="20" fill="#161616" font-weight="400" text-anchor="end" textLength="65.8" lengthAdjust="spacingAndGlyphs" >25,465</text>
<text x="1151.5" y="1092.95" font-size="20" fill="#161616" font-weight="400" text-anchor="start" textLength="138.8" lengthAdjust="spacingAndGlyphs" >www.bing.com</text>
<rect x="1120.5" y="1110.55" width="610" height="6.2" rx="3.1" fill="#ebebeb"/>
<rect x="1120.5" y="1110.55" width="128.71" height="6.2" rx="3.1" fill="#3584fe"/>
<text x="1730.5" y="1092.95" font-size="20" fill="#161616" font-weight="400" text-anchor="end" textLength="62.7" lengthAdjust="spacingAndGlyphs" >10,326</text>
<text x="1151.5" y="1169.50" font-size="20" fill="#161616" font-weight="400" text-anchor="start" textLength="186" lengthAdjust="spacingAndGlyphs" >www.facebook.com</text>
<rect x="1120.5" y="1187.10" width="610" height="6.2" rx="3.1" fill="#ebebeb"/>
<rect x="1120.5" y="1187.10" width="53.68" height="6.2" rx="3.1" fill="#3584fe"/>
<text x="1730.5" y="1169.50" font-size="20" fill="#161616" font-weight="400" text-anchor="end" textLength="53.6" lengthAdjust="spacingAndGlyphs" >4,280</text>
<text x="1151.5" y="1246.05" font-size="20" fill="#161616" font-weight="400" text-anchor="start" textLength="174.8" lengthAdjust="spacingAndGlyphs" >www.youtube.com</text>
<rect x="1120.5" y="1263.65" width="610" height="6.2" rx="3.1" fill="#ebebeb"/>
<rect x="1120.5" y="1263.65" width="34.77" height="6.2" rx="3.1" fill="#3584fe"/>
<text x="1730.5" y="1246.05" font-size="20" fill="#161616" font-weight="400" text-anchor="end" textLength="52.7" lengthAdjust="spacingAndGlyphs" >2,837</text>
<text x="1151.5" y="1322.60" font-size="20" fill="#161616" font-weight="400" text-anchor="start" textLength="153" lengthAdjust="spacingAndGlyphs" >www.reddit.com</text>
<rect x="1120.5" y="1340.20" width="610" height="6.2" rx="3.1" fill="#ebebeb"/>
<rect x="1120.5" y="1340.20" width="18.91" height="6.2" rx="3.1" fill="#3584fe"/>
<text x="1730.5" y="1322.60" font-size="20" fill="#161616" font-weight="400" text-anchor="end" textLength="49.7" lengthAdjust="spacingAndGlyphs" >1,588</text>
<g fill="none" stroke="#666" stroke-width="1.6" stroke-linejoin="round"><path d="M1331.3 1001.6 H1325.8 V1015.6 H1339.8 V1010.1"/><path d="M1330.8 1010.6 L1339.3 1002.1 M1334.3 1001.6 H1339.8 V1007.1"/></g>
<g fill="none" stroke="#666" stroke-width="1.6" stroke-linejoin="round"><path d="M1307.3 1078.15 H1301.8 V1092.15 H1315.8 V1086.65"/><path d="M1306.8 1087.15 L1315.3 1078.65 M1310.3 1078.15 H1315.8 V1083.65"/></g>
<g fill="none" stroke="#666" stroke-width="1.6" stroke-linejoin="round"><path d="M1354.9 1154.7 H1349.4 V1168.7 H1363.4 V1163.2"/><path d="M1354.4 1163.7 L1362.9 1155.2 M1357.9 1154.7 H1363.4 V1160.2"/></g>
<g fill="none" stroke="#666" stroke-width="1.6" stroke-linejoin="round"><path d="M1343.7 1231.25 H1338.2 V1245.25 H1352.2 V1239.75"/><path d="M1343.2 1240.25 L1351.7 1231.75 M1346.7 1231.25 H1352.2 V1236.75"/></g>
<g fill="none" stroke="#666" stroke-width="1.6" stroke-linejoin="round"><path d="M1321.9 1307.8 H1316.4 V1321.8 H1330.4 V1316.3"/><path d="M1321.4 1316.8 L1329.9 1308.3 M1324.9 1307.8 H1330.4 V1313.3"/></g>
<g fill="none" stroke-width="2.4">
<path d="M1135.3 1003.6 A7.3 7.3 0 0 0 1123.6 1005.5" stroke="#ea4335"/>
<path d="M1123.6 1005.5 A7.3 7.3 0 0 0 1123.6 1012.4" stroke="#fbbc05"/>
<path d="M1123.6 1012.4 A7.3 7.3 0 0 0 1134.6 1014.6" stroke="#34a853"/>
<path d="M1134.6 1014.6 A7.3 7.3 0 0 0 1137.3 1008.8 H1130" stroke="#4285f4"/>
</g>
<defs><linearGradient id="bing" x1="0.2" y1="0" x2="0.8" y2="1"><stop offset="0" stop-color="#2fb0f0"/><stop offset="0.55" stop-color="#1f72f2"/><stop offset="1" stop-color="#3cc0f4"/></linearGradient></defs>
<path d="M1124 1077 Q1124 1075.6 1125.4 1076.1 L1128 1077.1 Q1128.9 1077.5 1128.9 1078.5 L1128.9 1090.6 L1133.3 1088 L1131.2 1085.3 Q1130.3 1083.6 1130.6 1082.4 Q1131 1081.6 1132.2 1082.1 L1135.5 1083.6 Q1137 1084.4 1137 1086 L1137 1089.2 Q1137 1090.2 1136 1090.9 L1131 1094.3 Q1130 1095 1129 1094.5 L1125 1092 Q1124 1091.3 1124 1090 Z" fill="url(#bing)"/>
<defs><linearGradient id="fbg" x1="0" y1="0" x2="0" y2="1"><stop offset="0" stop-color="#18a4fc"/><stop offset="1" stop-color="#0a66e4"/></linearGradient></defs><circle cx="1130" cy="1162.5" r="10" fill="url(#fbg)"/>
<path d="M1131.4 1172.5 V1165 H1134 L1134.4 1162 H1131.4 V1160.2 Q1131.4 1158.9 1132.8 1158.9 H1134.5 V1156.3 Q1133.5 1156.1 1132.3 1156.1 Q1128.4 1156.1 1128.4 1160 V1162 H1125.8 V1165 H1128.4 V1172.5 Z" fill="#fff"/>
<rect x="1120" y="1232" width="20" height="14.3" rx="4" fill="#ff0000"/>
<path d="M1128.3 1236.6 L1132.6 1239.1 L1128.3 1241.6 Z" fill="#fff"/>
<circle cx="1130" cy="1315.4" r="10" fill="#ff4500"/>
<ellipse cx="1130.2" cy="1317.8" rx="5.8" ry="3.6" fill="#fff"/>
<circle cx="1124.3" cy="1315" r="1.4" fill="#fff"/><circle cx="1136" cy="1315" r="1.4" fill="#fff"/>
<circle cx="1128" cy="1317.3" r="0.9" fill="#ff4500"/><circle cx="1132.4" cy="1317.3" r="0.9" fill="#ff4500"/>
<path d="M1130.4 1313.8 L1131 1309.8 L1134 1310.4" fill="none" stroke="#fff" stroke-width="0.8"/><circle cx="1134.6" cy="1310.6" r="1" fill="#fff"/>
</g>
</svg></body></html>
